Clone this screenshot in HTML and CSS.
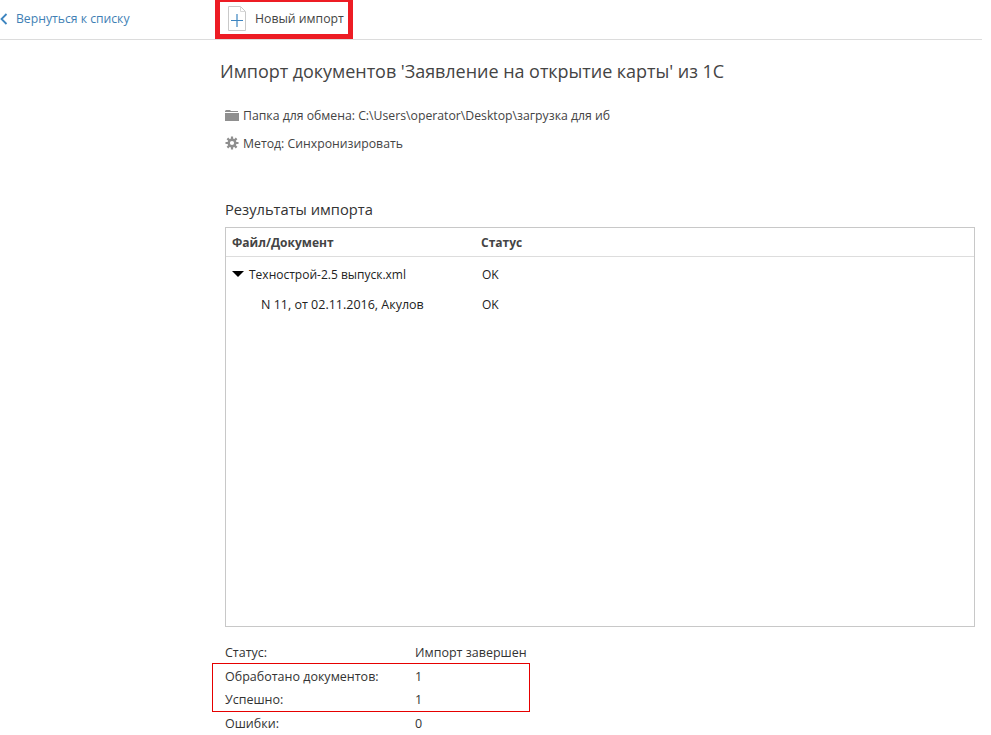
FILE: index.html
```html
<!DOCTYPE html>
<html lang="ru">
<head>
  <meta charset="UTF-8">
  <title>Импорт документов</title>
  <link rel="stylesheet" href="styles.css">
</head>
<body>
  <div class="page">
    <div class="topbar">
      <a class="back-link" href="#">
        <svg class="back-icon" width="8" height="12" viewBox="0 0 8 12"><path d="M6.5 1 1.5 6l5 5" fill="none" stroke="#3d85c0" stroke-width="1.8"/></svg>
        <span>Вернуться к списку</span>
      </a>
      <a class="new-import" href="#">
        <svg width="18" height="25" viewBox="0 0 18 25">
          <path d="M.5.5h12l5 5v19H.5z" fill="#fff" stroke="#c9c9c9"/>
          <path d="M12.5.5v5h5" fill="none" stroke="#d8d8d8"/>
          <path d="M9 8v13M3 14.500h12" fill="none" stroke="#3d85c0" stroke-width="1.200"/>
        </svg>
        <span>Новый импорт</span>
      </a>
    </div>

    <div class="content">
      <h1 class="title">Импорт документов 'Заявление на открытие карты' из 1С</h1>

      <div class="params">
        <div class="param">
          <svg width="14" height="11" viewBox="0 0 14 11"><path d="M1 0h4l1 1h7v1H0V1zM0 3h14v8H0z" fill="#8f8f8f"/></svg>
          <span>Папка для обмена: C:\Users\operator\Desktop\загрузка для иб</span>
        </div>
        <div class="param">
          <svg width="14" height="14" viewBox="0 0 14 14"><circle cx="7" cy="7" r="3.300" fill="none" stroke="#8f8f8f" stroke-width="2.400"/><path d="M7 .5v3M7 10.500v3M.5 7h3M10.500 7h3M2.400 2.400l2 2M9.600 9.600l2 2M2.400 11.600l2-2M9.600 4.400l2-2" stroke="#8f8f8f" stroke-width="2.200"/></svg>
          <span>Метод: Синхронизировать</span>
        </div>
      </div>

      <h2 class="section-title">Результаты импорта</h2>

      <div class="results">
        <div class="results-head">
          <div class="col-name">Файл/Документ</div>
          <div class="col-status">Статус</div>
        </div>
        <div class="results-row file-row">
          <div class="col-name"><i class="arrow"></i>Технострой-2.5 выпуск.xml</div>
          <div class="col-status">OK</div>
        </div>
        <div class="results-row">
          <div class="col-name doc-name">N 11, от 02.11.2016, Акулов</div>
          <div class="col-status">OK</div>
        </div>
      </div>

      <div class="summary">
        <div class="summary-row summary-first"><span class="summary-label">Статус:</span><span>Импорт завершен</span></div>
        <div class="summary-mark">
          <div class="summary-row"><span class="summary-label">Обработано документов:</span><span>1</span></div>
          <div class="summary-row"><span class="summary-label">Успешно:</span><span>1</span></div>
        </div>
        <div class="summary-row"><span class="summary-label">Ошибки:</span><span>0</span></div>
      </div>
    </div>
  </div>
</body>
</html>
```

FILE: styles.css
```css
html, body {
  margin: 0;
  padding: 0;
  background: #fff;
  overflow: hidden;
}
body {
  font-family: 'Open Sans', 'Liberation Sans', sans-serif;
  font-size: 12px;
  color: #333;
}
a {
  text-decoration: none;
}

.page {
  width: 982px;
  height: 735px;
  overflow: hidden;
}

.topbar {
  display: flex;
  height: 39px;
  border-bottom: 1px solid #dcdcdc;
}
.back-link {
  display: flex;
  align-items: center;
  gap: 8px;
  width: 215px;
  height: 37px;
  box-sizing: border-box;
  font-size: 12.2px;
  color: #3f7fb5;
}
.new-import {
  display: flex;
  align-items: center;
  gap: 9px;
  width: 138px;
  height: 39px;
  box-sizing: border-box;
  padding-left: 8px;
  border: 5px solid #ed1c24;
  border-top-width: 2px;
  font-size: 12.25px;
  color: #444;
}

.content {
  padding-left: 225px;
  padding-right: 7px;
}
.title {
  margin: 19px 0 0 -5px;
  font-size: 18px;
  font-weight: 400;
  line-height: 24px;
  letter-spacing: -0.04px;
  color: #444;
}

.params {
  margin-top: 18px;
}
.param {
  display: flex;
  align-items: center;
  gap: 4px;
  height: 28px;
  font-size: 12.25px;
  color: #444;
}

.section-title {
  margin: 42px 0 0;
  font-size: 14.7px;
  font-weight: 400;
  line-height: 20px;
  color: #333;
}

.results {
  margin-top: 8px;
  height: 398px;
  border: 1px solid #c8c8c8;
}
.results-head {
  display: flex;
  align-items: center;
  height: 29px;
  box-sizing: border-box;
  padding-top: 1px;
  border-bottom: 1px solid #ddd;
  font-weight: 700;
  color: #444;
}
.results-row {
  display: flex;
  align-items: center;
  height: 30px;
  color: #222;
}
.file-row {
  margin-top: 2px;
}
.col-name {
  width: 249px;
  padding-left: 6px;
  flex: none;
  box-sizing: border-box;
}
.results-row .col-status {
  padding-left: 7px;
}
.results-head .col-status {
  padding-left: 6px;
}
.doc-name {
  padding-left: 35px;
  font-size: 12.5px;
}
.arrow {
  display: inline-block;
  width: 0;
  height: 0;
  margin: 0 5px 2px 0;
  border-left: 6px solid transparent;
  border-right: 6px solid transparent;
  border-top: 6px solid #000;
}

.summary {
  margin-top: 15px;
  font-size: 12.5px;
  color: #333;
}
.summary-row {
  display: flex;
  align-items: center;
  height: 23px;
}
.summary-first {
  height: 21px;
}
.summary-label {
  width: 190px;
}
.summary-mark {
  width: 318px;
  margin-left: -13px;
  padding: 1px 0 0 13px;
  border: 1px solid #e60000;
  box-sizing: border-box;
}
.summary-mark .summary-row {
  margin-left: -1px;
}
```
